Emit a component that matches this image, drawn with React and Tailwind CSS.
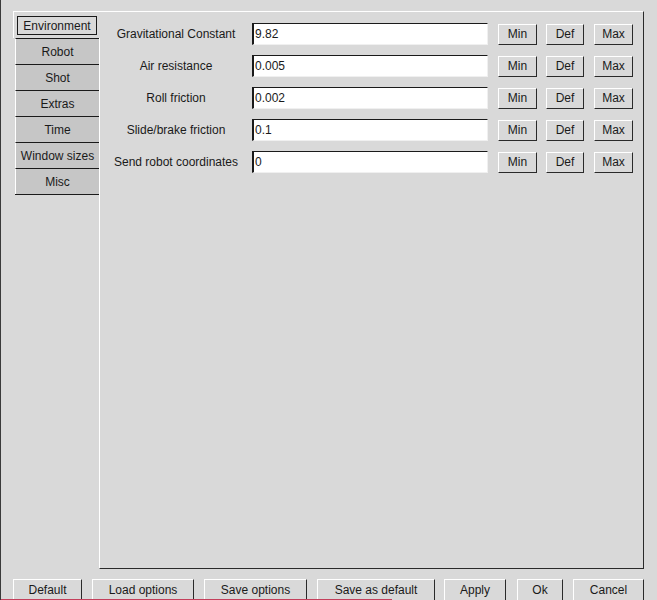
import React from "react";

const tabs = ["Robot", "Shot", "Extras", "Time", "Window sizes", "Misc"];

const rows = [
  { label: "Gravitational Constant", value: "9.82" },
  { label: "Air resistance", value: "0.005" },
  { label: "Roll friction", value: "0.002" },
  { label: "Slide/brake friction", value: "0.1" },
  { label: "Send robot coordinates", value: "0" },
];

const bottomButtons = [
  { label: "Default", w: "w-[69px]" },
  { label: "Load options", w: "w-[102px] ml-[10px]" },
  { label: "Save options", w: "w-[103px] ml-[10px]" },
  { label: "Save as default", w: "w-[118px] ml-[10px]" },
  { label: "Apply", w: "w-[62px] ml-[9px]" },
  { label: "Ok", w: "w-[46px] ml-[11px]" },
  { label: "Cancel", w: "w-[71px] ml-[10px]" },
];

const SmallButton = ({ children, className = "" }) => (
  <button
    className={`h-[21px] flex items-center justify-center bg-[#d9d9d9] border border-t-white border-l-white border-b-[#2a2a2a] border-r-[#2a2a2a] text-[12px] text-[#1a1a1a] ${className}`}
  >
    {children}
  </button>
);

export default function App() {
  return (
    <div className="relative w-[657px] h-[600px] overflow-hidden bg-[#d9d9d9] border-l border-[#3a3a3a] pl-[12px] pt-[11px] font-['Liberation_Sans',Arial,sans-serif] text-[12px] text-[#1a1a1a]">
      {/* TABS + PANEL */}
      <div className="flex">
        <div className="w-[86px] flex flex-col relative z-10">
          {/* selected tab */}
          <div className="h-[27px] w-[87px] bg-[#d9d9d9] border-t border-l border-white pt-[4px] pl-[3px]">
            <div className="w-[80px] h-[19px] border border-[#1a1a1a] flex items-center justify-center">
              Environment
            </div>
          </div>
          <div className="ml-[2px] w-[84px] border-b border-[#1a1a1a]">
            {tabs.map((t) => (
              <div
                key={t}
                className="h-[26px] bg-[#c6c6c6] border-t border-t-[#1a1a1a] border-l border-l-white flex items-center justify-center"
              >
                {t}
              </div>
            ))}
          </div>
        </div>

        <div className="w-[545px] h-[558px] border-t border-l border-white border-r border-r-[#2a2a2a] border-b border-b-[#2a2a2a] pt-[11px] flex flex-col gap-[10px]">
          {rows.map((r) => (
            <div key={r.label} className="flex items-center h-[22px]">
              <div className="w-[152px] text-center pb-px">{r.label}</div>
              <div className="w-[236px] h-[22px] bg-white border border-t-[#1a1a1a] border-l-2 border-l-[#1a1a1a] border-b-[#f0f0f0] border-r-[#f0f0f0] pl-[1px] flex items-center">
                {r.value}
              </div>
              <SmallButton className="ml-[10px] w-[39px]">Min</SmallButton>
              <SmallButton className="ml-[9px] w-[38px]">Def</SmallButton>
              <SmallButton className="ml-[10px] w-[39px]">Max</SmallButton>
            </div>
          ))}
        </div>
      </div>

      {/* BOTTOM BUTTONS */}
      <div className="flex mt-[10px]">
        {bottomButtons.map((b) => (
          <button
            key={b.label}
            className={`${b.w} h-[24px] pb-[2px] flex items-center justify-center bg-[#d9d9d9] border border-t-white border-l-white border-b-[#2a2a2a] border-r-[#2a2a2a] text-[12px]`}
          >
            {b.label}
          </button>
        ))}
      </div>

      <div className="absolute left-0 bottom-0 h-px w-[391px] bg-[#c4405c]" />
    </div>
  );
}
